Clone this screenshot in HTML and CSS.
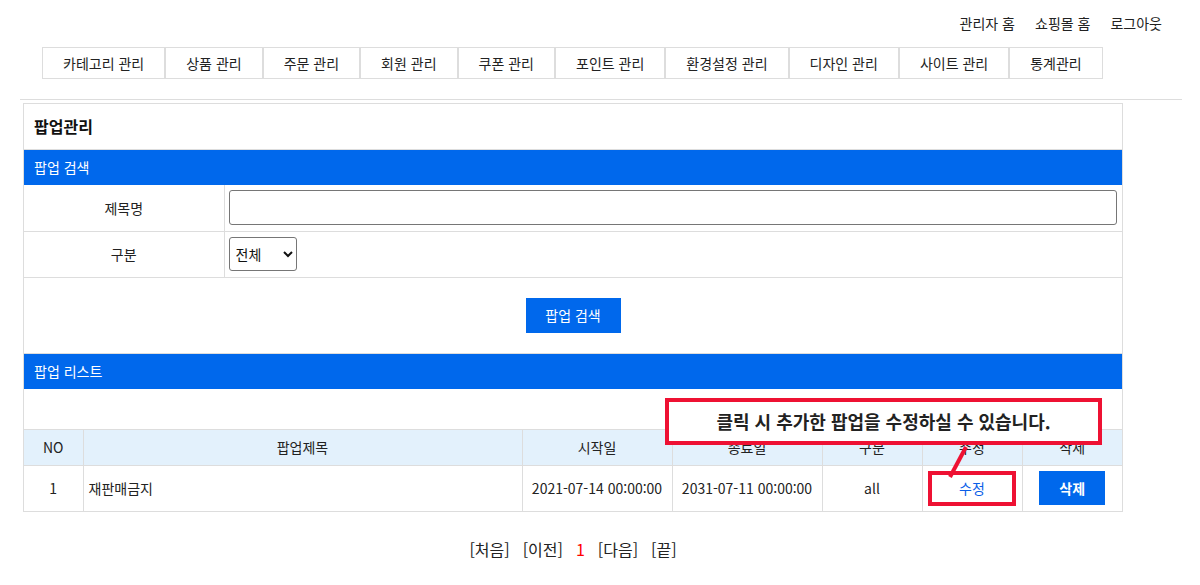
FILE: index.html
```html
<!DOCTYPE html>
<html lang="ko">
<head>
<meta charset="utf-8">
<title>팝업관리</title>
<link rel="stylesheet" href="styles.css">
</head>
<body>
<div class="top-links">
  <a href="#">관리자 홈</a>
  <a href="#">쇼핑몰 홈</a>
  <a href="#">로그아웃</a>
</div>
<ul class="gnb">
  <li>카테고리 관리</li>
  <li>상품 관리</li>
  <li>주문 관리</li>
  <li>회원 관리</li>
  <li>쿠폰 관리</li>
  <li>포인트 관리</li>
  <li>환경설정 관리</li>
  <li>디자인 관리</li>
  <li>사이트 관리</li>
  <li>통계관리</li>
</ul>
<div class="rule"></div>
<div class="panel">
  <h2 class="panel-title">팝업관리</h2>
  <div class="bar">팝업 검색</div>
  <table class="form">
    <tr>
      <th>제목명</th>
      <td><input type="text" class="text-input"></td>
    </tr>
    <tr>
      <th>구분</th>
      <td><select class="select"><option>전체</option></select></td>
    </tr>
  </table>
  <div class="actions"><button class="btn">팝업 검색</button></div>
  <div class="bar">팝업 리스트</div>
  <div class="list">
    <table class="grid">
      <colgroup>
        <col class="c-no"><col><col class="c-date"><col class="c-date"><col class="c-s"><col class="c-s"><col class="c-s">
      </colgroup>
      <thead>
        <tr><th>NO</th><th>팝업제목</th><th>시작일</th><th>종료일</th><th>구분</th><th>수정</th><th>삭제</th></tr>
      </thead>
      <tbody>
        <tr>
          <td>1</td>
          <td class="left">재판매금지</td>
          <td>2021-07-14 00:00:00</td>
          <td>2031-07-11 00:00:00</td>
          <td>all</td>
          <td><a href="#" class="edit">수정</a></td>
          <td><button class="btn btn-del">삭제</button></td>
        </tr>
      </tbody>
    </table>
    <div class="callout">클릭 시 추가한 팝업을 수정하실 수 있습니다.</div>
    <svg class="pointer" width="30" height="40" viewBox="0 0 30 40"><line x1="6" y1="36" x2="22" y2="6" stroke="#ee1133" stroke-width="4"/></svg>
    <div class="highlight"></div>
  </div>
</div>
<div class="paging">
  <a href="#">[처음]</a>
  <a href="#">[이전]</a>
  <span class="current">1</span>
  <a href="#">[다음]</a>
  <a href="#">[끝]</a>
</div>
</body>
</html>
```

FILE: styles.css
```css
* { box-sizing: border-box; }
body {
  margin: 0;
  font-family: "Noto Sans CJK KR", "Noto Sans", sans-serif;
  font-size: 14px;
  color: #222;
  background: #fff;
}
a { color: inherit; text-decoration: none; }

.top-links {
  display: flex;
  justify-content: flex-end;
  gap: 20px;
  padding: 13px 38px 0 0;
  line-height: 20px;
  font-size: 14px;
}

.gnb {
  list-style: none;
  margin: 14px 0 0 42px;
  padding: 0;
  display: flex;
}
.gnb li {
  border: 1px solid #ddd;
  height: 32px;
  line-height: 30px;
  padding: 0 20px;
  white-space: nowrap;
}

.rule {
  margin: 20px 0 0 20px;
  width: 1162px;
  height: 1px;
  background: #ddd;
}

.panel {
  margin: 3px 0 0 23px;
  width: 1100px;
  border: 1px solid #ddd;
}
.panel-title {
  margin: 0;
  height: 46px;
  line-height: 45px;
  padding: 0 10px;
  font-size: 16px;
  font-weight: 700;
  color: #111;
  border-bottom: 1px solid #ddd;
}
.bar {
  height: 35px;
  line-height: 35px;
  padding: 0 10px;
  background: #0068ec;
  color: #fff;
  font-size: 14px;
}

.form {
  width: 100%;
  border-collapse: collapse;
}
.form th, .form td {
  border-bottom: 1px solid #ddd;
  height: 46px;
  padding: 0 5px;
}
.form th {
  width: 200px;
  font-weight: 400;
  text-align: center;
  border-right: 1px solid #ddd;
}
.form td { padding-left: 4px; }
.text-input {
  display: block;
  width: 100%;
  height: 35px;
  border: 1px solid #767676;
  border-radius: 3px;
  font-family: inherit;
  font-size: 14px;
}
.select {
  display: block;
  width: 68px;
  height: 34px;
  border: 1px solid #767676;
  border-radius: 3px;
  font-family: inherit;
  font-size: 14px;
  color: #111;
  background: #fff;
  padding: 0 2px;
}

.actions {
  height: 76px;
  padding-top: 20px;
  text-align: center;
  border-bottom: 1px solid #ddd;
}
.btn {
  font-family: inherit;
  border: 0;
  background: #0068ec;
  color: #fff;
  font-size: 14px;
  width: 95px;
  height: 35px;
  cursor: pointer;
}

.list {
  position: relative;
  padding-top: 40px;
}
.grid {
  width: 100%;
  border-collapse: collapse;
  table-layout: fixed;
}
.grid .c-no { width: 59px; }
.grid .c-date { width: 150px; }
.grid .c-s { width: 100px; }
.grid th, .grid td {
  border: 1px solid #ddd;
  text-align: center;
  font-weight: 400;
  padding: 0 5px;
}
.grid th:first-child, .grid td:first-child { border-left: 0; }
.grid th:last-child, .grid td:last-child { border-right: 0; }
.grid tbody tr:last-child td { border-bottom: 0; }
.grid thead th {
  height: 36px;
  background: #e3f1fc;
}
.grid tbody td { height: 46px; }
.grid td.left { text-align: left; }
.edit { color: #0a5ee8; }
.btn-del {
  width: 66px;
  height: 34px;
  font-weight: 700;
  vertical-align: middle;
}

.callout {
  position: absolute;
  left: 641px;
  top: 9px;
  width: 437px;
  height: 47px;
  border: 4px solid #ee1133;
  background: #fff;
  text-align: center;
  line-height: 39px;
  font-size: 18px;
  font-weight: 700;
  color: #222;
  z-index: 2;
}
.pointer {
  position: absolute;
  left: 920px;
  top: 52px;
  z-index: 3;
}
.highlight {
  position: absolute;
  left: 904px;
  top: 82px;
  width: 88px;
  height: 35px;
  border: 4px solid #ee1133;
  z-index: 2;
}

.paging {
  width: 1100px;
  margin: 26px 0 0 23px;
  display: flex;
  justify-content: center;
  gap: 13px;
  font-size: 16px;
  line-height: 23px;
  color: #222;
}
.paging .current { color: #ff0000; }
```
